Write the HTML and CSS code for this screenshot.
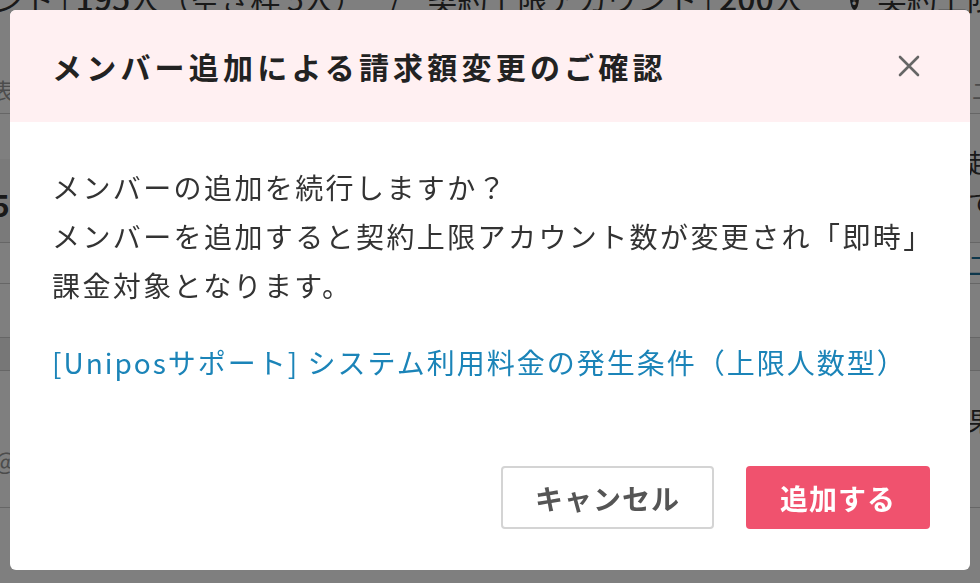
FILE: index.html
```html
<!DOCTYPE html>
<html lang="ja">
<head>
  <meta charset="utf-8">
  <title>メンバー追加</title>
  <link rel="stylesheet" href="styles.css">
</head>
<body>

  <div class="page">
    <div class="summary">
      <span>ント | <b>195</b>人（空き枠 5人）</span>
      <span class="slash">/</span>
      <span>契約上限アカウント | <b>200</b>人</span>
      <span class="help">?</span>
      <span>契約上限人数</span>
    </div>
    <div class="row row-head"><span>表示</span><span>二</span></div>
    <div class="row row-band"><span class="num">5</span><span class="side">超<br>て</span></div>
    <div class="row row-link"><span></span><span class="blue">二</span></div>
    <div class="row row-gap"><span></span><span></span></div>
    <div class="row row-grey"><span></span><span></span></div>
    <div class="row row-mail"><span class="mail">@</span><span>果</span></div>
  </div>

  <div class="overlay"></div>

  <div class="modal">
    <div class="modal-header">
      <h1>メンバー追加による請求額変更のご確認</h1>
      <button class="close" aria-label="閉じる">
        <svg width="22" height="22" viewBox="0 0 22 22"><path d="M2 2L20 20M20 2L2 20" stroke="#666" stroke-width="2.6" stroke-linecap="round"/></svg>
      </button>
    </div>
    <div class="modal-body">
      <p>メンバーの追加を続行しますか？<br>メンバーを追加すると契約上限アカウント数が変更され「即時」<br>課金対象となります。</p>
      <a class="link" href="#">[Uniposサポート] システム利用料金の発生条件（上限人数型）</a>
    </div>
    <div class="modal-footer">
      <button class="btn btn-cancel">キャンセル</button>
      <button class="btn btn-add">追加する</button>
    </div>
  </div>

</body>
</html>
```

FILE: styles.css
```css
body {
  margin: 0;
  font-family: "Noto Sans CJK JP", "Noto Sans", sans-serif;
  color: #333;
  background: #fff;
  overflow: hidden;
}

.page {
  height: 583px;
  overflow: hidden;
}

/* header line of the page behind the dialog */
.summary {
  display: flex;
  align-items: center;
  gap: 18px;
  font-size: 30px;
  line-height: 34px;
  margin-top: -20px;
  margin-left: -6px;
  white-space: nowrap;
  height: 34px;
}

.summary b {
  font-weight: 500;
  font-size: 32px;
}

.slash {
  padding: 0 8px;
}

.help {
  display: inline-block;
  width: 26px;
  height: 26px;
  line-height: 26px;
  border-radius: 50%;
  background: #333;
  color: #fff;
  font-size: 18px;
  text-align: center;
  font-weight: bold;
  margin-left: 28px;
}

.row {
  display: flex;
  justify-content: space-between;
  border-top: 1px solid #ccc;
  font-size: 26px;
  box-sizing: border-box;
}

.row span:last-child {
  margin-right: -14px;
}

.row-head {
  margin-top: 62px;
  height: 37px;
  color: #999;
  font-size: 22px;
  line-height: 26px;
  border-top: 0;
}

.row-head span:first-child {
  margin-left: -8px;
}

.row-band {
  height: 129px;
  background: linear-gradient(#fff 45px, #f4f4f4 45px);
  padding-top: 28px;
  line-height: 40px;
}

.num {
  font-weight: bold;
  font-size: 30px;
  margin-left: -8px;
  padding-top: 42px;
}

.row-link {
  height: 41px;
  align-items: center;
}

.blue {
  color: #1b6f99;
}

.row-gap {
  height: 54px;
}

.row-grey {
  height: 33px;
  background: #eee;
}

.row-mail {
  height: 138px;
  border-bottom: 1px solid #ccc;
  align-items: center;
}

.row-mail span:last-child {
  margin-top: -40px;
}

.mail {
  color: #999;
  font-size: 24px;
  margin-left: -6px;
  margin-top: 40px;
}

.overlay {
  position: fixed;
  inset: 0;
  background: rgba(0, 0, 0, 0.5);
}

.modal {
  position: fixed;
  left: 10px;
  top: 10px;
  width: 960px;
  height: 560px;
  background: #fff;
  border-radius: 6px;
  overflow: hidden;
  display: flex;
  flex-direction: column;
}

.modal-header {
  height: 112px;
  background: #fff0f2;
  display: flex;
  align-items: center;
  justify-content: space-between;
  padding: 0 50px 0 42px;
  box-sizing: border-box;
}

.modal-header h1 {
  margin: 0;
  font-size: 30px;
  font-weight: bold;
  letter-spacing: 4.2px;
  color: #222;
}

.close {
  border: 0;
  background: none;
  padding: 0;
  display: flex;
  cursor: pointer;
}

.modal-body {
  padding: 41px 20px 0 42px;
  flex: 1;
}

.modal-body p {
  margin: 0;
  font-size: 28px;
  line-height: 49px;
  letter-spacing: 2.4px;
  white-space: nowrap;
  color: #333;
}

.link {
  display: block;
  margin-top: 28px;
  font-size: 28px;
  line-height: 49px;
  letter-spacing: 2px;
  white-space: nowrap;
  color: #1b84b8;
  text-decoration: none;
}

.modal-footer {
  display: flex;
  justify-content: flex-end;
  gap: 32px;
  padding: 0 40px 41px;
}

.btn {
  height: 63px;
  border-radius: 4px;
  font-family: inherit;
  font-size: 28px;
  font-weight: bold;
  letter-spacing: 1px;
  cursor: pointer;
}

.btn-cancel {
  width: 213px;
  background: #fff;
  border: 2px solid #d4d4d4;
  color: #555;
}

.btn-add {
  width: 184px;
  background: #f0526e;
  border: 0;
  color: #fff;
}
```
